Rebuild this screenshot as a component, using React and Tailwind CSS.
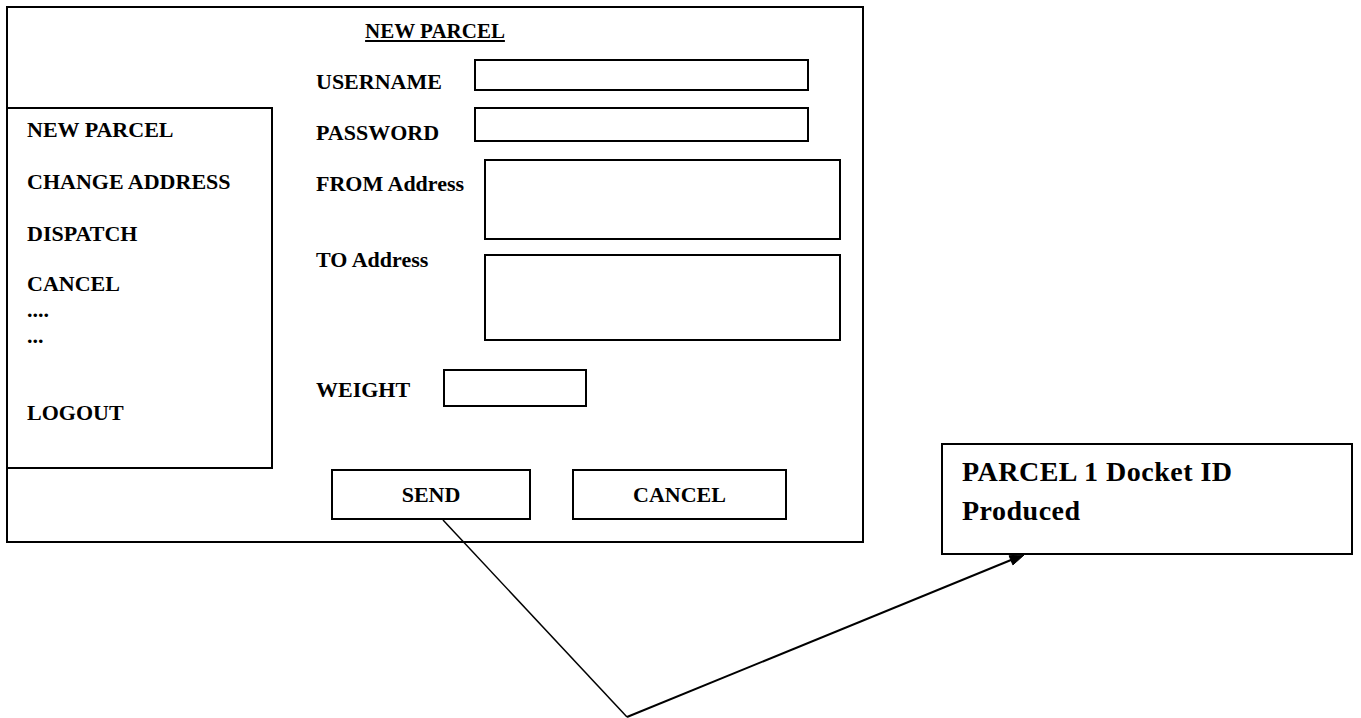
import React from "react";

const label = "text-[22px] leading-[26px] font-bold";
const box = "border-2 border-black bg-white";

const Sidebar = () => (
  <div className="-ml-[2px] mt-[64px] flex h-[362px] w-[267px] shrink-0 flex-col border-2 border-black pl-[19px] pt-[8px] text-[22px] font-bold leading-[26px]">
    <span>NEW PARCEL</span>
    <span className="mt-[26px]">CHANGE ADDRESS</span>
    <span className="mt-[26px]">DISPATCH</span>
    <span className="mt-[24px]">CANCEL</span>
    <span>....</span>
    <span>...</span>
    <span className="mt-[51px]">LOGOUT</span>
  </div>
);

const ParcelForm = () => (
  <div className="ml-[43px] flex flex-col">
    <div className="mt-[16px] flex items-start">
      <span className={`${label} mt-[10px] w-[158px]`}>USERNAME</span>
      <div className={`${box} h-[32px] w-[335px]`} />
    </div>
    <div className="mt-[12px] flex items-start">
      <span className={`${label} mt-[13px] w-[158px]`}>PASSWORD</span>
      <div className={`${box} h-[35px] w-[335px]`} />
    </div>
    <div className="mt-[13px] flex items-start">
      <span className={`${label} mt-[12px] w-[168px]`}>FROM Address</span>
      <div className={`${box} h-[81px] w-[357px]`} />
    </div>
    <div className="mt-[7px] flex items-start">
      <span className={`${label} w-[168px]`}>TO Address</span>
      <div className={`${box} mt-[7px] h-[87px] w-[357px]`} />
    </div>
    <div className="mt-[28px] flex items-start">
      <span className={`${label} mt-[8px] w-[127px]`}>WEIGHT</span>
      <div className={`${box} h-[38px] w-[144px]`} />
    </div>
    <div className="mt-[62px] flex">
      <div className={`${box} ${label} ml-[15px] flex h-[51px] w-[200px] items-center justify-center`}>
        SEND
      </div>
      <div className={`${box} ${label} ml-[41px] flex h-[51px] w-[215px] items-center justify-center`}>
        CANCEL
      </div>
    </div>
  </div>
);

const Connector = () => (
  <svg
    className="pointer-events-none absolute left-0 top-0"
    width="1361"
    height="718"
    viewBox="0 0 1361 718"
  >
    <line x1="443" y1="520" x2="627" y2="717" stroke="#000" strokeWidth="1.5" />
    <line x1="627" y1="717" x2="1011" y2="560" stroke="#000" strokeWidth="2" />
    <polygon points="1024,555 1012.9,564.9 1009.1,555.7" fill="#000" stroke="#000" strokeWidth="1" />
  </svg>
);

export default function App() {
  return (
    <div className="relative h-[718px] w-[1361px] overflow-hidden bg-white font-['Liberation_Serif',serif] text-black">
      <div className="absolute left-[6px] top-[6px] flex h-[537px] w-[858px] flex-col border-2 border-black">
        <div className="pt-[11px] text-center text-[21px] font-bold leading-[24px]">
          <span className="underline underline-offset-[2px]">NEW PARCEL</span>
        </div>
        <div className="flex">
          <Sidebar />
          <ParcelForm />
        </div>
      </div>

      <div className="absolute left-[941px] top-[443px] h-[112px] w-[412px] border-2 border-black pl-[19px] pt-[7px] text-[28px] font-bold leading-[39px] tracking-[0.5px]">
        PARCEL 1 Docket ID
        <br />
        Produced
      </div>

      <Connector />
    </div>
  );
}
